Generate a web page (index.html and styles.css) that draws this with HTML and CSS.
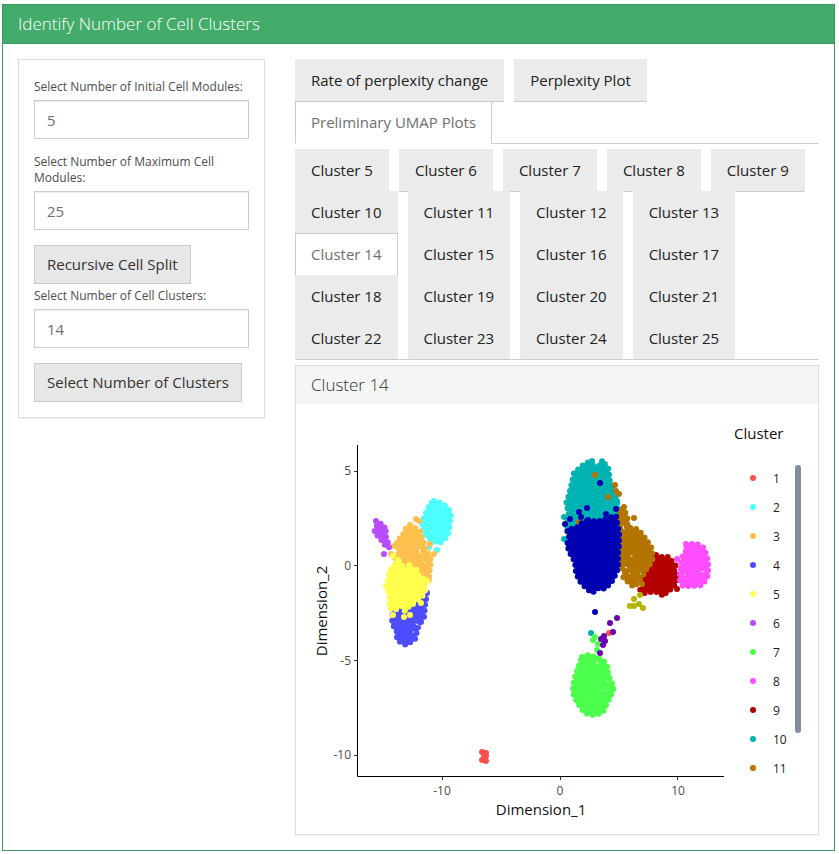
FILE: index.html
```html
<!DOCTYPE html>
<html lang="en">
<head>
  <meta charset="UTF-8">
  <meta name="viewport" content="width=device-width, initial-scale=1.0">
  <title>Identify Number of Cell Clusters</title>
  <link rel="stylesheet" href="styles.css">
</head>
<body>
  <div class="panel panel-success">
    <h1 class="panel-heading">Identify Number of Cell Clusters</h1>
    <div class="row">
      <div class="col-side">
        <form class="panel well">
          <div class="form-group">
            <label for="initModules">Select Number of Initial Cell Modules:</label>
            <input type="text" id="initModules" value="5">
          </div>
          <div class="form-group">
            <label for="maxModules">Select Number of Maximum Cell Modules:</label>
            <input type="text" id="maxModules" value="25">
          </div>
          <button type="button" class="btn">Recursive Cell Split</button>
          <div class="form-group">
            <label for="numClusters">Select Number of Cell Clusters:</label>
            <input type="text" id="numClusters" value="14">
          </div>
          <button type="button" class="btn">Select Number of Clusters</button>
        </form>
      </div>

      <div class="col-main">
        <ul class="tabs">
          <li><a href="#">Rate of perplexity change</a></li>
          <li><a href="#">Perplexity Plot</a></li>
          <li class="active"><a href="#">Preliminary UMAP Plots</a></li>
        </ul>
        <ul class="tabs">
          <li><a href="#">Cluster 5</a></li>
          <li><a href="#">Cluster 6</a></li>
          <li><a href="#">Cluster 7</a></li>
          <li><a href="#">Cluster 8</a></li>
          <li><a href="#">Cluster 9</a></li>
          <li><a href="#">Cluster 10</a></li>
          <li><a href="#">Cluster 11</a></li>
          <li><a href="#">Cluster 12</a></li>
          <li><a href="#">Cluster 13</a></li>
          <li class="active"><a href="#">Cluster 14</a></li>
          <li><a href="#">Cluster 15</a></li>
          <li><a href="#">Cluster 16</a></li>
          <li><a href="#">Cluster 17</a></li>
          <li><a href="#">Cluster 18</a></li>
          <li><a href="#">Cluster 19</a></li>
          <li><a href="#">Cluster 20</a></li>
          <li><a href="#">Cluster 21</a></li>
          <li><a href="#">Cluster 22</a></li>
          <li><a href="#">Cluster 23</a></li>
          <li><a href="#">Cluster 24</a></li>
          <li><a href="#">Cluster 25</a></li>
        </ul>

        <div class="panel">
          <h2 class="panel-heading">Cluster 14</h2>
          <svg class="plot" viewBox="296 404 522 430" role="img" aria-label="UMAP plot, 14 clusters">
            <!-- axes -->
            <path class="axis" d="M357.500 445V776.500H724"/>
            <path class="tick" d="M354 471.500h3M354 565.500h3M354 660.500h3M354 755.500h3M442.500 777v3M560.500 777v3M677.500 777v3"/>
            <g class="tick-label end">
              <text x="351" y="475">5</text>
              <text x="351" y="570">0</text>
              <text x="351" y="665">-5</text>
              <text x="351" y="759">-10</text>
            </g>
            <g class="tick-label middle">
              <text x="442" y="795">-10</text>
              <text x="560" y="795">0</text>
              <text x="678" y="795">10</text>
            </g>
            <text class="title middle" x="541" y="815">Dimension_1</text>
            <text class="title middle" transform="translate(327 611) rotate(-90)">Dimension_2</text>

            <!-- left group -->
            <path class="blob c2" d="M434 501L441 503L447 507L449 510L451 514L450 522L449 530L447 537L440 543L432 541L427 537L423 530L422 523L425 515L428 508L431 503Z"/>
            <path class="dots c2" d="M437 550h0M429 547h0"/>
            <path class="blob c3" d="M410 525L415 528L421 532L422 540L424 543L425 549L429 555L431 560L430 568L429 576L430 581L423 577L420 570L413 569L403 563L395 558L400 552L397 545L397 540L402 537L406 528Z"/>
            <path class="dots c3" d="M416 519h0M419 521h0M430 544h0M434 554h0M394 546h0M391 554h0"/>
            <path class="gap" d="M419 549l2 4M424 562l1 1"/>
            <path class="blob c4" d="M427 593L425 605L424 617L418 627L415 639L406 645L397 640L397 632L392 623L393 610L400 603Z"/>
            <path class="gap" d="M416 624l2 1M413 632l1 0"/>
            <path class="blob c5" d="M398 560L393 567L389 571L389 577L386 586L389 594L390 600L389 608L395 610L401 606L405 611L410 605L415 601L421 598L425 592L425 585L423 578L418 575L416 568L407 571L403 567Z"/>
            <path class="dots c5" d="M393 556h0M409 565h0M393 615h0M404 617h0M410 615h0M421 603h0M427 581h0M413 604h0"/>
            <path class="blob c6" d="M376 521L380 522L382 527L387 528L385 533L387 541L390 547L387 548L383 542L379 537L374 532L377 527Z"/>
            <path class="dots c6" d="M384 554h0"/>

            <!-- right group -->
            <path class="blob c10" d="M592 461L593 466L602 465L602 460L605 464L609 470L609 479L613 487L614 493L617 502L619 510L615 527L566 530L569 512L566 504L569 495L571 487L574 473L582 466L587 463Z"/>
            <path class="dots c10" d="M564 539h0M564 517h0M617 501h0M591 633h0"/>
            <path class="blob c9" d="M656 555L662 557L669 557L673 563L676 566L674 571L679 575L676 582L673 588L667 591L664 596L657 592L650 592L644 593L640 590L645 583L644 573L650 565L654 560Z"/>
            <path class="dots c9" d="M677 589h0"/>
            <path class="blob c11" d="M624 507L625 512L628 520L627 527L636 529L640 532L645 538L651 547L653 558L649 566L645 571L642 577L634 587L628 582L623 577L625 572L619 568L619 555L621 543L622 530L618 520L619 512Z"/>
            <path class="dots c11" d="M634 518h0M615 485h0M616 491h0M619 494h0M608 497h0M595 475h0M642 584h0M579 522h0"/>
            <path class="gap" d="M623 526l1 3M625 567l2 1M640 573l1 1M631 556l1 0M629 573l1 1"/>
            <path class="blob navy" d="M588 520L597 522L603 520L612 517L616 516L617 523L619 532L619 545L618 553L618 568L613 580L605 589L600 587L592 593L583 585L579 580L576 572L575 562L570 553L567 545L569 537L567 530L578 527L582 523Z"/>
            <path class="dots navy" d="M600 483h0M579 512h0M587 508h0M581 517h0M570 519h0M565 524h0M606 514h0M616 509h0M595 612h0"/>
            <path class="blob c8" d="M686 544L697 544L704 548L707 557L708 564L708 572L707 578L702 585L693 586L683 586L680 582L680 573L681 563L683 555L687 550Z"/>
            <path class="dots c8" d="M677 559h0"/>
            <path class="gap" d="M702 572l2 -1M684 574l1 1"/>
            <path class="dots olive" d="M640 595h0M634 599h0M630 606h0M634 606h0M639 604h0M643 608h0"/>

            <!-- bottom groups -->
            <path class="blob c7" d="M582 657L589 655L595 657L603 660L608 668L608 675L612 683L614 687L612 693L607 703L603 712L598 714L592 715L585 713L581 708L576 700L573 693L573 687L575 677L578 668Z"/>
            <path class="dots c7" d="M595 637h0M593 640h0M598 644h0M597 650h0"/>
            <path class="gap" d="M596 662l2 1M607 681l1 0M605 691l1 -1"/>
            <path class="dots c1" d="M482 752h0M486 753h0M484 756h0M486 756h0M482 760h0M484 759h0M486 761h0M609 633h0"/>
            <path class="dots violet" d="M617 618h0M610 623h0M613 632h0M604 636h0M601 639h0M605 641h0M603 645h0M600 653h0"/>

            <!-- legend -->
            <text class="title" x="734" y="439">Cluster</text>
            <path class="dots c1" d="M753 478h0"/>
            <path class="dots c2" d="M753 507h0"/>
            <path class="dots c3" d="M753 536h0"/>
            <path class="dots c4" d="M753 565h0"/>
            <path class="dots c5" d="M753 594h0"/>
            <path class="dots c6" d="M753 623h0"/>
            <path class="dots c7" d="M753 652h0"/>
            <path class="dots c8" d="M753 681h0"/>
            <path class="dots c9" d="M753 710h0"/>
            <path class="dots c10" d="M753 739h0"/>
            <path class="dots c11" d="M753 768h0"/>
            <g class="legend-label">
              <text x="773" y="483">1</text>
              <text x="773" y="512">2</text>
              <text x="773" y="541">3</text>
              <text x="773" y="570">4</text>
              <text x="773" y="599">5</text>
              <text x="773" y="628">6</text>
              <text x="773" y="657">7</text>
              <text x="773" y="686">8</text>
              <text x="773" y="715">9</text>
              <text x="773" y="744">10</text>
              <text x="773" y="773">11</text>
            </g>
            <rect class="scrollbar" x="795" y="465" width="6" height="268" rx="3"/>
          </svg>
        </div>
      </div>
    </div>
  </div>
</body>
</html>
```
FILE: styles.css
```css
* {
  box-sizing: border-box;
}
body {
  margin: 0;
  padding: 4px 4px 0 2px;
  background: #fff;
  color: #222;
  font-family: "Open Sans", "Liberation Sans", sans-serif;
  font-size: 15px;
  line-height: 21px;
}
.panel {
  border: 1px solid #ddd;
  background: #fff;
  box-shadow: 0 1px 1px rgba(0,0,0,0.05);
}
.panel-heading {
  margin: 0;
  padding: 10px 15px;
  background: #f5f5f5;
  color: #333;
  font-size: 17px;
  font-weight: 300;
  line-height: 18px;
}
.panel-success {
  border-color: #3c9a5f;
}
.panel-success > .panel-heading {
  background: #43ac6a;
  border-bottom: 1px solid #3c9a5f;
  color: #fff;
}
.row {
  display: flex;
  align-items: flex-start;
  padding: 15px 0;
}
.col-side, .col-main {
  padding: 0 15px;
  min-width: 0;
}
.col-side { flex: 0 0 33.3333%; }
.col-main { flex: 1; }

/* form */
.well {
  padding: 15px;
}
.form-group {
  margin-bottom: 15px;
}
label {
  display: inline-block;
  margin-bottom: 5px;
  color: #4d4d4d;
  font-size: 12px;
  line-height: 16px;
}
input[type="text"] {
  display: block;
  width: 100%;
  height: 39px;
  padding: 8px 12px;
  border: 1px solid #ccc;
  color: #6f6f6f;
  font-family: inherit;
  font-size: 15px;
  box-shadow: inset 0 1px 1px rgba(0,0,0,0.075);
}
.btn {
  display: block;
  height: 39px;
  padding: 0 12px 2px;
  border: 1px solid #cbcbcb;
  background: #e7e7e7;
  color: #333;
  font-family: inherit;
  font-size: 15px;
  cursor: pointer;
}

/* tabs */
.tabs {
  display: flex;
  flex-wrap: wrap;
  margin: 0 0 5px;
  padding: 0;
  border-bottom: 1px solid #ccc;
  list-style: none;
}
.tabs li {
  margin-bottom: -1px;
  position: relative;
}
.tabs a {
  display: block;
  margin-right: 10px;
  padding: 10px 15px;
  border: 1px solid #ebebeb;
  border-bottom-color: #ccc;
  background: #ebebeb;
  color: #222;
  text-decoration: none;
}
.tabs .active a {
  border-color: #ccc;
  border-bottom-color: #fff;
  background: #fff;
  color: #6f6f6f;
}

/* plot */
.plot {
  display: block;
  width: 100%;
  height: auto;
}
.axis {
  fill: none;
  stroke: #000;
}
.tick { stroke: #333; }
.tick-label, .legend-label { font-size: 12px; }
.tick-label { fill: #4d4d4d; }
.legend-label { fill: #222; }
.title {
  fill: #111;
  font-size: 15px;
}
.middle { text-anchor: middle; }
.end { text-anchor: end; }
.scrollbar { fill: #808ba4; }

/* point clouds: filled area with a row of round points along its edge */
.blob {
  fill: var(--c);
  stroke: var(--c);
  stroke-width: 6;
  stroke-linecap: round;
  stroke-dasharray: 0 6;
}
.dots {
  stroke: var(--c);
  stroke-width: 6;
  stroke-linecap: round;
}
/* thin spots between points */
.gap {
  stroke: #fff;
  stroke-linecap: round;
}
.c1 { --c: #ff4d4d; }
.c2 { --c: #4dffff; }
.c3 { --c: #ffc04d; }
.c4 { --c: #4d4dff; }
.c5 { --c: #ffff4d; }
.c6 { --c: #b84dff; }
.c7 { --c: #4dff4d; }
.c8 { --c: #ff4dff; }
.c9 { --c: #b30000; }
.c10 { --c: #00b3b3; }
.c11 { --c: #b37400; }
.navy { --c: #0000b3; }
.olive { --c: #b3b300; }
.violet { --c: #6b00b3; }
```
